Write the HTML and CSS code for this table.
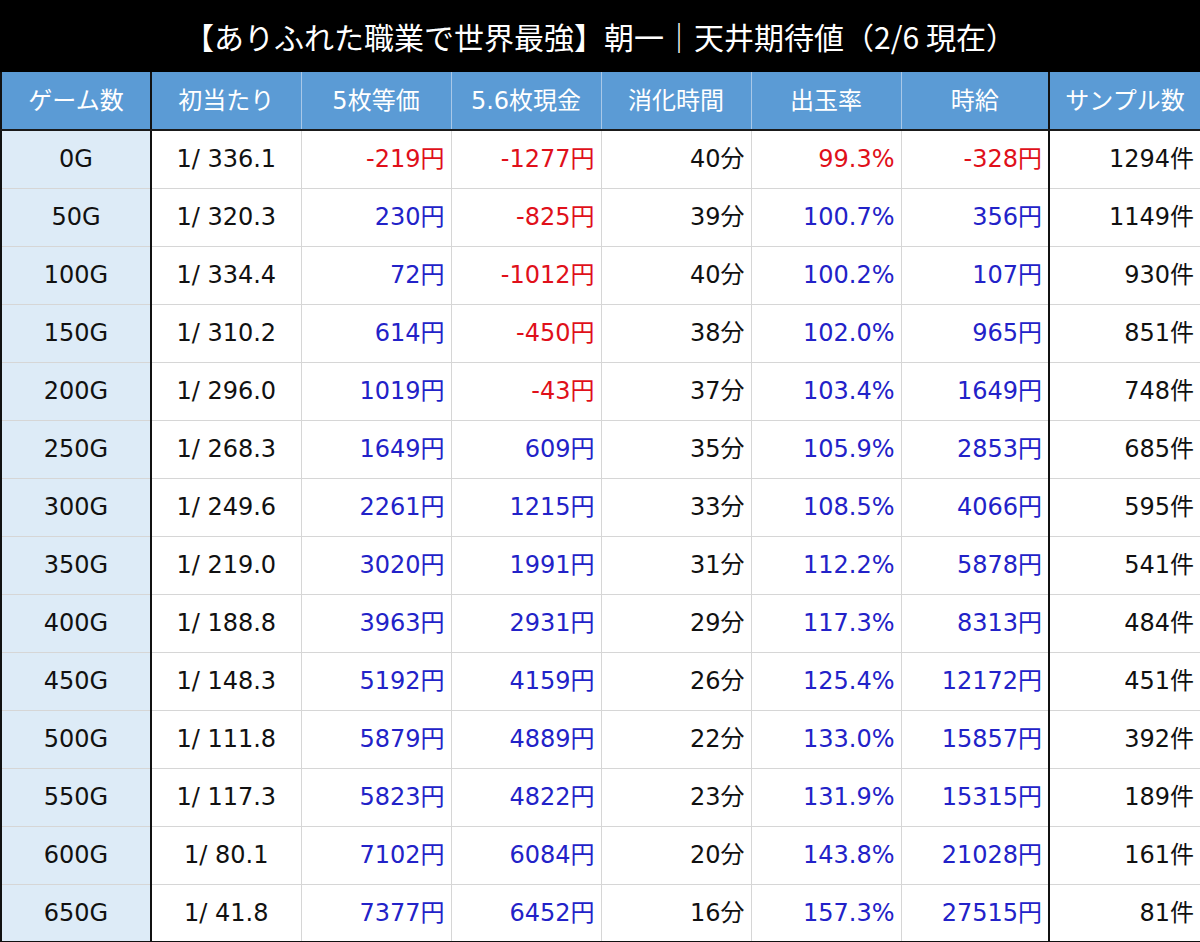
FILE: index.html
```html
<!DOCTYPE html>
<html lang="ja">
<head>
<meta charset="utf-8">
<link rel="stylesheet" href="styles.css">
</head>
<body>
<div class="title">【ありふれた職業で世界最強】朝一｜天井期待値（2/6 現在）</div>
<table class="data">
<colgroup>
<col class="c1"><col class="c2"><col class="c3"><col class="c4"><col class="c5"><col class="c6"><col class="c7"><col class="c8">
</colgroup>
<thead>
<tr><th class="g">ゲーム数</th><th>初当たり</th><th>5枚等価</th><th>5.6枚現金</th><th>消化時間</th><th>出玉率</th><th class="sep">時給</th><th>サンプル数</th></tr>
</thead>
<tbody>
<tr><td class="g">0G</td><td class="c">1/ 336.1</td><td class="r neg">-219円</td><td class="r neg">-1277円</td><td class="r">40分</td><td class="r neg">99.3%</td><td class="r neg sep">-328円</td><td class="r">1294件</td></tr>
<tr><td class="g">50G</td><td class="c">1/ 320.3</td><td class="r pos">230円</td><td class="r neg">-825円</td><td class="r">39分</td><td class="r pos">100.7%</td><td class="r pos sep">356円</td><td class="r">1149件</td></tr>
<tr><td class="g">100G</td><td class="c">1/ 334.4</td><td class="r pos">72円</td><td class="r neg">-1012円</td><td class="r">40分</td><td class="r pos">100.2%</td><td class="r pos sep">107円</td><td class="r">930件</td></tr>
<tr><td class="g">150G</td><td class="c">1/ 310.2</td><td class="r pos">614円</td><td class="r neg">-450円</td><td class="r">38分</td><td class="r pos">102.0%</td><td class="r pos sep">965円</td><td class="r">851件</td></tr>
<tr><td class="g">200G</td><td class="c">1/ 296.0</td><td class="r pos">1019円</td><td class="r neg">-43円</td><td class="r">37分</td><td class="r pos">103.4%</td><td class="r pos sep">1649円</td><td class="r">748件</td></tr>
<tr><td class="g">250G</td><td class="c">1/ 268.3</td><td class="r pos">1649円</td><td class="r pos">609円</td><td class="r">35分</td><td class="r pos">105.9%</td><td class="r pos sep">2853円</td><td class="r">685件</td></tr>
<tr><td class="g">300G</td><td class="c">1/ 249.6</td><td class="r pos">2261円</td><td class="r pos">1215円</td><td class="r">33分</td><td class="r pos">108.5%</td><td class="r pos sep">4066円</td><td class="r">595件</td></tr>
<tr><td class="g">350G</td><td class="c">1/ 219.0</td><td class="r pos">3020円</td><td class="r pos">1991円</td><td class="r">31分</td><td class="r pos">112.2%</td><td class="r pos sep">5878円</td><td class="r">541件</td></tr>
<tr><td class="g">400G</td><td class="c">1/ 188.8</td><td class="r pos">3963円</td><td class="r pos">2931円</td><td class="r">29分</td><td class="r pos">117.3%</td><td class="r pos sep">8313円</td><td class="r">484件</td></tr>
<tr><td class="g">450G</td><td class="c">1/ 148.3</td><td class="r pos">5192円</td><td class="r pos">4159円</td><td class="r">26分</td><td class="r pos">125.4%</td><td class="r pos sep">12172円</td><td class="r">451件</td></tr>
<tr><td class="g">500G</td><td class="c">1/ 111.8</td><td class="r pos">5879円</td><td class="r pos">4889円</td><td class="r">22分</td><td class="r pos">133.0%</td><td class="r pos sep">15857円</td><td class="r">392件</td></tr>
<tr><td class="g">550G</td><td class="c">1/ 117.3</td><td class="r pos">5823円</td><td class="r pos">4822円</td><td class="r">23分</td><td class="r pos">131.9%</td><td class="r pos sep">15315円</td><td class="r">189件</td></tr>
<tr><td class="g">600G</td><td class="c">1/ 80.1</td><td class="r pos">7102円</td><td class="r pos">6084円</td><td class="r">20分</td><td class="r pos">143.8%</td><td class="r pos sep">21028円</td><td class="r">161件</td></tr>
<tr><td class="g">650G</td><td class="c">1/ 41.8</td><td class="r pos">7377円</td><td class="r pos">6452円</td><td class="r">16分</td><td class="r pos">157.3%</td><td class="r pos sep">27515円</td><td class="r">81件</td></tr>
</tbody>
</table>
</body>
</html>
```

FILE: styles.css
```css
html, body {
  margin: 0;
  padding: 0;
  background: #ffffff;
}
body {
  width: 1200px;
  font-family: "Noto Sans CJK JP", "Noto Sans", sans-serif;
  color: #111111;
}
.title {
  height: 72px;
  background: #000000;
  color: #ffffff;
  font-size: 30px;
  line-height: 72px;
  text-align: center;
}
.data {
  width: 1200px;
  border-collapse: collapse;
  table-layout: fixed;
  font-family: "DejaVu Sans", "Noto Sans CJK JP", sans-serif;
  font-size: 24px;
}
.c1, .c2, .c3, .c4, .c5, .c6 { width: 150px; }
.c7 { width: 148px; }
.c8 { width: 152px; }
.data th, .data td {
  height: 58px;
  padding: 0 6px;
  box-sizing: border-box;
  white-space: nowrap;
  font-weight: normal;
  line-height: 30px;
  vertical-align: middle;
}
.data th {
  background: #5b9bd5;
  color: #ffffff;
  text-align: center;
  font-size: 24px;
  border-left: 1px solid #a9c8e8;
  border-right: 1px solid #a9c8e8;
  border-top: none;
  border-bottom: 2px solid #1a1a1a;
}
.data td {
  border: 1px solid #d6d6d6;
}
.data .g {
  background: #ddebf7;
  text-align: center;
  border-left: 2px solid #111111;
  border-right: 2px solid #111111;
}
.data th.g { background: #5b9bd5; border-left: 2px solid #111; }
.data .sep { border-right: 2px solid #111111; }
.data tr > :last-child { border-right: 2px solid #111111; }
.data tbody tr:last-child td { border-bottom: 2px solid #111111; }
.c { text-align: center; }
.r { text-align: right; }
.neg { color: #e0101a; }
.pos { color: #2222c8; }
```
